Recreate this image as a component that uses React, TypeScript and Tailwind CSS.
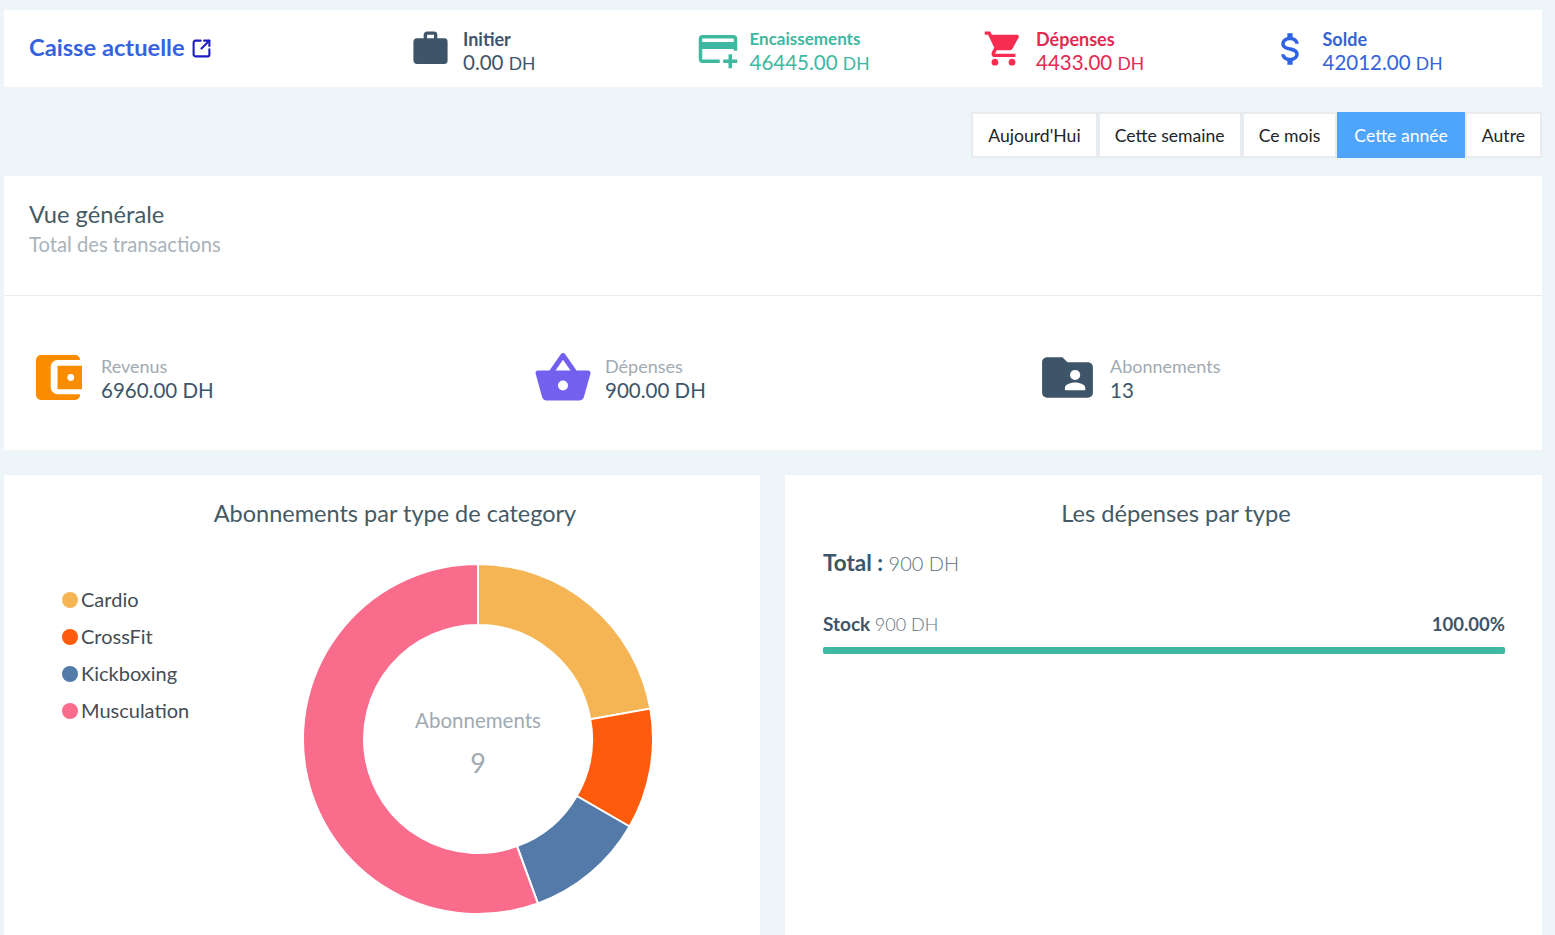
import React from 'react';
import { SquareArrowOutUpRight } from 'lucide-react';

const briefcase = 'M10,2H14A2,2 0 0,1 16,4V6H20A2,2 0 0,1 22,8V19A2,2 0 0,1 20,21H4C2.89,21 2,20.1 2,19V8C2,6.89 2.89,6 4,6H8V4C8,2.89 8.89,2 10,2M14,6V4H10V6H14Z';
const cardPlus = 'M21 4H3C1.89 4 1 4.89 1 6V18C1 19.11 1.89 20 3 20H13V18H3V12H21V13H23V6C23 4.89 22.1 4 21 4M21 8H3V6H21V8M20 15V18H23V20H20V23H18V20H15V18H18V15H20Z';
const cart = 'M17,18C15.89,18 15,18.89 15,20A2,2 0 0,0 17,22A2,2 0 0,0 19,20C19,18.89 18.1,18 17,18M1,2V4H3L6.6,11.59L5.24,14.04C5.09,14.32 5,14.65 5,15A2,2 0 0,0 7,17H19V15H7.42A0.25,0.25 0 0,1 7.17,14.75C7.17,14.7 7.18,14.66 7.2,14.63L8.1,13H15.55C16.3,13 16.96,12.58 17.3,11.97L20.88,5.5C20.95,5.34 21,5.17 21,5A1,1 0 0,0 20,4H5.21L4.27,2M7,18C5.89,18 5,18.89 5,20A2,2 0 0,0 7,22A2,2 0 0,0 9,20C9,18.89 8.1,18 7,18Z';
const dollar = 'M7,15H9C9,16.08 10.37,17 12,17C13.63,17 15,16.08 15,15C15,13.9 13.96,13.5 11.76,12.97C9.64,12.44 7,11.78 7,9C7,7.21 8.47,5.69 10.5,5.18V3H13.5V5.18C15.53,5.69 17,7.21 17,9H15C15,7.92 13.63,7 12,7C10.37,7 9,7.92 9,9C9,10.1 10.04,10.5 12.24,11.03C14.36,11.56 17,12.22 17,15C17,16.79 15.53,18.31 13.5,18.82V21H10.5V18.82C8.47,18.31 7,16.79 7,15Z';
const basket = 'M5.5,21C4.72,21 4.04,20.55 3.71,19.9L1.1,10.44L1,10A1,1 0 0,1 2,9H6.58L11.18,2.43C11.36,2.17 11.66,2 12,2C12.34,2 12.65,2.17 12.83,2.44L17.42,9H22A1,1 0 0,1 23,10L22.96,10.29L20.29,19.9C19.96,20.55 19.28,21 18.5,21H5.5M12,4.74L9,9H15L12,4.74M12,13A2,2 0 0,0 10,15A2,2 0 0,0 12,17A2,2 0 0,0 14,15A2,2 0 0,0 12,13Z';
const folderUser = 'M19,17H11V16C11,14.67 13.67,14 15,14C16.33,14 19,14.67 19,16M15,9A2,2 0 0,1 17,11A2,2 0 0,1 15,13A2,2 0 0,1 13,11A2,2 0 0,1 15,9M20,6H12L10,4H4C2.89,4 2,4.89 2,6V18A2,2 0 0,0 4,20H20A2,2 0 0,0 22,18V8C22,6.89 21.1,6 20,6Z';

function Icon({ d, className }: { d: string; className: string }) {
  return (
    <svg viewBox="0 0 24 24" fill="currentColor" className={className}>
      <path d={d} />
    </svg>
  );
}

function WalletIcon() {
  return (
    <svg viewBox="0 0 48 46" className="w-[47px] h-[45px]">
      <path fill="#fb8c00" d="M5 0H40a5 5 0 0 1 5 5V5H22a7 7 0 0 0-7 7V33a7 7 0 0 0 7 7H45v1a5 5 0 0 1-5 5H5a5 5 0 0 1-5-5V5a5 5 0 0 1 5-5Z" />
      <path fillRule="evenodd" fill="#fb8c00" d="M22 11H47V35H22Z M32 23a3.5 3.5 0 1 0 7 0a3.5 3.5 0 1 0-7 0Z" />
    </svg>
  );
}

const caisse = [
  { icon: briefcase, iconClass: 'w-[41px] h-[41px] text-[#3e5569]', title: 'Initier', titleSize: 'text-[18px]', amount: '0.00', color: 'text-[#3e5569]' },
  { icon: cardPlus, iconClass: 'w-[42px] h-[42px] text-[#3eb8a0]', title: 'Encaissements', titleSize: 'text-[17px]', amount: '46445.00', color: 'text-[#3eb8a0]' },
  { icon: cart, iconClass: 'w-[41px] h-[41px] text-[#f62d51]', title: 'Dépenses', titleSize: 'text-[18px]', amount: '4433.00', color: 'text-[#e32a50]' },
  { icon: dollar, iconClass: 'w-[42px] h-[42px] ml-[-1px] text-[#2f63e3]', title: 'Solde', titleSize: 'text-[18px]', amount: '42012.00', color: 'text-[#3563d8]' },
];

const periods = ['Aujourd\'Hui', 'Cette semaine', 'Ce mois', 'Cette année', 'Autre'];

const legend = [
  { label: 'Cardio', color: 'bg-[#f6b554]' },
  { label: 'CrossFit', color: 'bg-[#ff5b0d]' },
  { label: 'Kickboxing', color: 'bg-[#537aa8]' },
  { label: 'Musculation', color: 'bg-[#f96c8c]' },
];

const slices = [
  { value: 2, color: '#f6b554' },
  { value: 1, color: '#ff5b0d' },
  { value: 1, color: '#537aa8' },
  { value: 5, color: '#f96c8c' },
];

function slicePath(from: number, to: number) {
  const R = 175;
  const r = 114;
  const c = 176;
  const pt = (rad: number, a: number) => `${c + rad * Math.sin(a)} ${c - rad * Math.cos(a)}`;
  const large = to - from > Math.PI ? 1 : 0;
  return `M${pt(R, from)}A${R} ${R} 0 ${large} 1 ${pt(R, to)}L${pt(r, to)}A${r} ${r} 0 ${large} 0 ${pt(r, from)}Z`;
}

function Donut() {
  let acc = 0;
  return (
    <div className="relative w-[352px] h-[352px]">
      <svg viewBox="0 0 352 352" className="w-[352px] h-[352px]">
        {slices.map((s) => {
          const from = (acc / 9) * Math.PI * 2;
          acc += s.value;
          const to = (acc / 9) * Math.PI * 2;
          return <path key={s.color} d={slicePath(from, to)} fill={s.color} stroke="#fff" strokeWidth="2" />;
        })}
      </svg>
      <div className="absolute inset-0 flex flex-col items-center justify-center text-[#a1aab2]">
        <span className="text-[20.5px] leading-[28px] mt-[6px]">Abonnements</span>
        <span className="text-[27px] leading-[32px] mt-[13px]">9</span>
      </div>
    </div>
  );
}

export default function App() {
  return (
    <div className="h-screen overflow-hidden bg-[#eef5f9] pl-[4px] pr-[13px] pt-[10px] font-['Lato','Noto_Sans',sans-serif] text-[#3e5569]">
      <div className="bg-white h-[77px] flex items-center pl-[25px]">
        <div className="w-[381px] shrink-0 flex items-center">
          <span className="text-[23.7px] font-bold text-[#3563e0] mb-[2px]">Caisse actuelle</span>
          <SquareArrowOutUpRight size={21} strokeWidth={2.4} className="ml-[6px] text-[#1c1cc8]" />
        </div>
        {caisse.map((c) => (
          <div key={c.title} className="w-[286.5px] shrink-0 flex items-center">
            <div className="w-[53px] flex justify-start">
              <Icon d={c.icon} className={c.iconClass} />
            </div>
            <div className={`${c.color} mt-[6px]`}>
              <div className={`${c.titleSize} font-bold leading-[22px]`}>{c.title}</div>
              <div className="text-[20.5px] leading-[24px]">
                {c.amount} <span className="text-[17.5px]">DH</span>
              </div>
            </div>
          </div>
        ))}
      </div>

      <div className="flex justify-end mt-[25px] h-[46px]">
        {periods.map((p) => (
          <button
            key={p}
            className={
              p === 'Cette année'
                ? 'px-[17px] pt-[2px] bg-[#4fa5fb] text-white text-[17.6px]'
                : 'px-[15px] pt-[2px] bg-white border-2 border-[#e9ecef] text-[#212529] text-[17.6px]'
            }
          >
            {p}
          </button>
        ))}
      </div>

      <div className="bg-white mt-[18px] h-[274px]">
        <div className="h-[120px] border-b border-[#e9ecef] pl-[25px] pt-[23px]">
          <div className="text-[23.7px] leading-[30px] text-[#455a64]">Vue générale</div>
          <div className="text-[20.2px] leading-[30px] text-[#a9b3bb]">Total des transactions</div>
        </div>
        <div className="grid grid-cols-[504px_505px_1fr] pl-[28px] pt-[51px]">
          <div className="flex items-center">
            <div className="ml-[4px] w-[65px]"><WalletIcon /></div>
            <Stat label="Revenus" value="6960.00 DH" />
          </div>
          <div className="flex items-center">
            <div className="w-[69px]"><Icon d={basket} className="w-[60px] h-[60px] ml-[-3px] text-[#7460ee]" /></div>
            <Stat label="Dépenses" value="900.00 DH" />
          </div>
          <div className="flex items-center">
            <div className="w-[69px]"><Icon d={folderUser} className="w-[61px] h-[61px] ml-[-4px] text-[#3e5569]" /></div>
            <Stat label="Abonnements" value="13" />
          </div>
        </div>
      </div>

      <div className="grid grid-cols-[756px_1fr] gap-[25px] mt-[25px] h-[600px]">
        <div className="bg-white pt-[23px]">
          <div className="text-[23.5px] leading-[30px] text-center pl-[26px] text-[#455a64]">Abonnements par type de category</div>
          <div className="flex mt-[35px]">
            <div className="w-[298px] pl-[58px] pt-[22px] flex flex-col gap-[9px]">
              {legend.map((l) => (
                <div key={l.label} className="flex items-center h-[28px] text-[20px] text-[#454c54]">
                  <span className={`w-[16px] h-[16px] rounded-full mr-[3px] mt-[2px] ${l.color}`} />
                  {l.label}
                </div>
              ))}
            </div>
            <Donut />
          </div>
        </div>
        <div className="bg-white pt-[23px] pl-[38px] pr-[37px]">
          <div className="text-[23.7px] leading-[30px] text-center pl-[24px] text-[#455a64]">Les dépenses par type</div>
          <div className="text-[20px] leading-[28px] mt-[21px]">
            <span className="font-bold text-[22.5px]">Total : </span>
            <span className="font-light text-[#5f6f7d]">900 DH</span>
          </div>
          <div className="flex justify-between text-[18px] leading-[24px] mt-[35px]">
            <span>
              <span className="font-bold text-[19px]">Stock </span>
              <span className="font-light text-[#5f6f7d]">900 DH</span>
            </span>
            <span className="font-bold text-[18.5px]">100.00%</span>
          </div>
          <div className="h-[7px] rounded-[2px] bg-[#3eb8a0] mt-[11px]" />
        </div>
      </div>
    </div>
  );
}

function Stat({ label, value }: { label: string; value: string }) {
  return (
    <div>
      <div className="text-[18px] leading-[24px] text-[#a1aab2]">{label}</div>
      <div className="text-[20.5px] leading-[24px]">{value}</div>
    </div>
  );
}
